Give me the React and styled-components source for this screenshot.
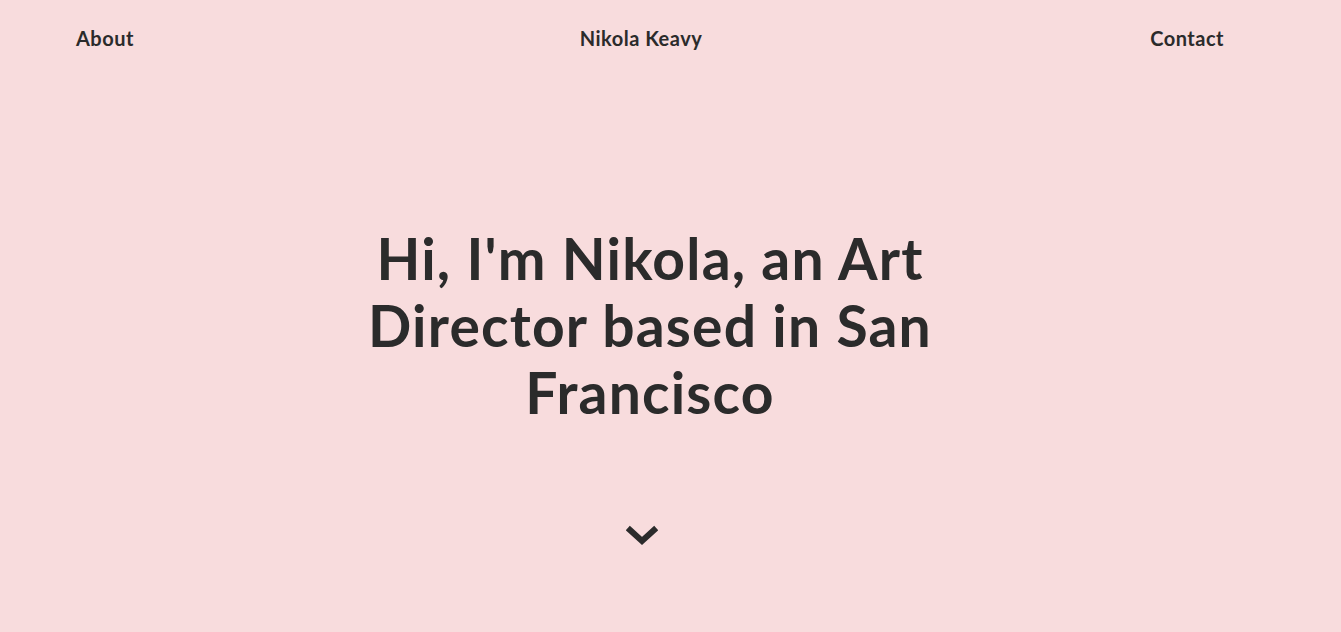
import React from "react"
import styled, { createGlobalStyle } from "styled-components"

const GlobalStyle = createGlobalStyle`
  html, body {
    margin: 0;
    padding: 0;
    background: #f8dcdd;
  }
  body {
    font-family: Lato, "Open Sans", sans-serif;
    color: #2b2b2b;
    -webkit-font-smoothing: antialiased;
  }
`

const Page = styled.div`
  min-height: 632px;
  padding: 0 117px 0 76px;
  box-sizing: border-box;
`

const Nav = styled.nav`
  display: grid;
  grid-template-columns: 1fr auto 1fr;
  align-items: center;
  height: 76px;
  font-size: 20px;
  font-weight: 700;
  letter-spacing: 0.5px;
`

const NavLink = styled.a`
  color: inherit;
  text-decoration: none;
  justify-self: ${(p) => p.align || "start"};
  margin-right: ${(p) => p.shift || 0}px;
`

const Hero = styled.section`
  display: flex;
  flex-direction: column;
  align-items: center;
  padding-top: 149px;
`

const Heading = styled.h1`
  margin: 0;
  max-width: 600px;
  text-align: center;
  font-size: 57px;
  line-height: 67px;
  font-weight: 700;
  letter-spacing: 1.2px;
`

const Scroll = styled.button`
  margin: 99px 16px 0 0;
  padding: 0;
  border: 0;
  background: none;
  color: inherit;
  display: flex;
  cursor: pointer;
`

export default function App() {
  return (
    <Page>
      <GlobalStyle />
      <Nav>
        <NavLink href="#about">About</NavLink>
        <NavLink href="#" align="center" shift={18}>
          Nikola Keavy
        </NavLink>
        <NavLink href="#contact" align="end">
          Contact
        </NavLink>
      </Nav>

      <Hero>
        <Heading>Hi, I'm Nikola, an Art Director based in San Francisco</Heading>
        <Scroll aria-label="Scroll down">
          <svg width="32" height="22" viewBox="0 0 32 22" fill="none">
            <path
              d="M4 5 L16 16 L28 5"
              stroke="currentColor"
              strokeWidth="6"
              strokeLinecap="square"
            />
          </svg>
        </Scroll>
      </Hero>
    </Page>
  )
}
